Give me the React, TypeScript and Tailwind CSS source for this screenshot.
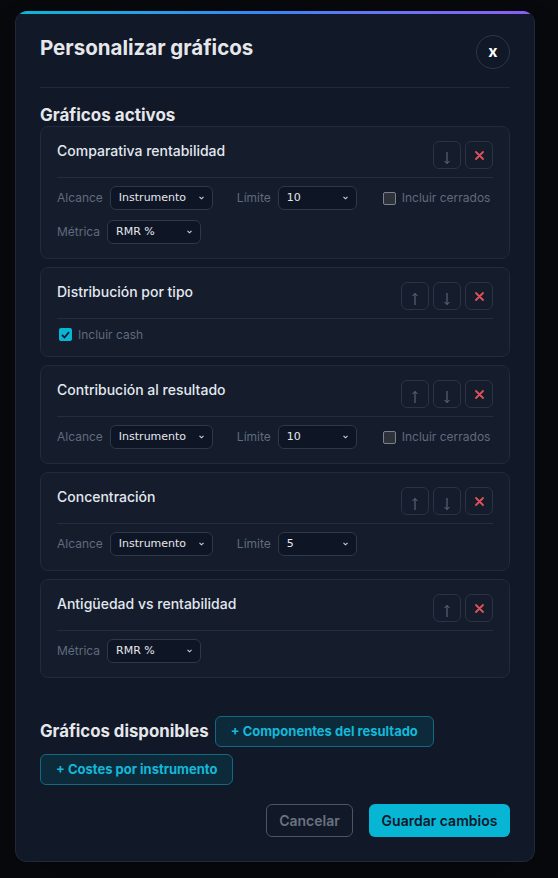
import React from "react"

type Ctrl =
  | { kind: "select"; label: string; value: string; w: string }
  | { kind: "check"; label: string; checked: boolean }

type Chart = {
  title: string
  actions: ("up" | "down" | "remove")[]
  rows: Ctrl[][]
}

const charts: Chart[] = [
  {
    title: "Comparativa rentabilidad",
    actions: ["down", "remove"],
    rows: [
      [
        { kind: "select", label: "Alcance", value: "Instrumento", w: "w-[103px]" },
        { kind: "select", label: "Límite", value: "10", w: "w-[79px]" },
        { kind: "check", label: "Incluir cerrados", checked: false },
      ],
      [{ kind: "select", label: "Métrica", value: "RMR %", w: "w-[94px]" }],
    ],
  },
  {
    title: "Distribución por tipo",
    actions: ["up", "down", "remove"],
    rows: [[{ kind: "check", label: "Incluir cash", checked: true }]],
  },
  {
    title: "Contribución al resultado",
    actions: ["up", "down", "remove"],
    rows: [
      [
        { kind: "select", label: "Alcance", value: "Instrumento", w: "w-[103px]" },
        { kind: "select", label: "Límite", value: "10", w: "w-[79px]" },
        { kind: "check", label: "Incluir cerrados", checked: false },
      ],
    ],
  },
  {
    title: "Concentración",
    actions: ["up", "down", "remove"],
    rows: [
      [
        { kind: "select", label: "Alcance", value: "Instrumento", w: "w-[103px]" },
        { kind: "select", label: "Límite", value: "5", w: "w-[79px]" },
      ],
    ],
  },
  {
    title: "Antigüedad vs rentabilidad",
    actions: ["up", "remove"],
    rows: [[{ kind: "select", label: "Métrica", value: "RMR %", w: "w-[94px]" }]],
  },
]

function ActionButton({ type }: { type: "up" | "down" | "remove" }) {
  return (
    <button className="flex h-7 w-7 items-center justify-center rounded-md border border-[#2a3446] bg-transparent">
      {type === "remove" ? (
        <svg width="9" height="9" viewBox="0 0 9 9" className="stroke-[#e0525a]" strokeWidth="1.8" strokeLinecap="round">
          <path d="M1 1 L8 8 M8 1 L1 8" />
        </svg>
      ) : (
        <svg width="8" height="14" viewBox="0 0 8 14" className="mt-[5px] stroke-[#647189]" strokeWidth="1" fill="none">
          {type === "up" ? <path d="M4 1.5 V13 M1.5 4 L4 1.5 L6.5 4" /> : <path d="M4 1 V12.5 M1.5 10 L4 12.5 L6.5 10" />}
        </svg>
      )}
    </button>
  )
}

function Select({ value, w }: { value: string; w: string }) {
  return (
    <div
      className={`flex h-6 ${w} items-center justify-between rounded-md border border-[#2d384b] bg-[#0e1525] pl-2 pr-[8px] text-[11px] text-[#e5e7eb]`}
      style={{ fontFamily: '"DejaVu Sans", sans-serif' }}
    >
      <span>{value}</span>
      <svg width="5" height="4" viewBox="0 0 5 4" fill="none" className="stroke-[#cbd5e1]" strokeWidth="1.1">
        <path d="M0.5 0.8 L2.5 2.8 L4.5 0.8" />
      </svg>
    </div>
  )
}

function Check({ label, checked }: { label: string; checked: boolean }) {
  return (
    <div className="flex h-[15px] items-center gap-[6px]">
      {checked ? (
        <div className="ml-[2px] flex h-[13px] w-[13px] items-center justify-center rounded-[2px] bg-[#06b6d4]">
          <svg width="9" height="8" viewBox="0 0 9 8" fill="none" className="stroke-[#0f172a]" strokeWidth="1.8">
            <path d="M1 4 L3.5 6.5 L8 1.2" />
          </svg>
        </div>
      ) : (
        <div className="ml-[2px] h-[13px] w-[13px] rounded-[2px] border border-[#7c818c] bg-[#2e323b]" />
      )}
      <span className="whitespace-nowrap text-[12px] text-[#5f6b7e]">{label}</span>
    </div>
  )
}

function ChartCard({ chart }: { chart: Chart }) {
  return (
    <div className="rounded-lg border border-[#222b3b] bg-[#151c2b] px-4 py-[14px]">
      <div className="flex items-start justify-between border-b border-[#252e3e] pb-2">
        <h4 className="text-[14px] font-medium leading-5 text-[#e2e8f0]">{chart.title}</h4>
        <div className="flex gap-1">
          {chart.actions.map((a) => (
            <ActionButton key={a} type={a} />
          ))}
        </div>
      </div>
      <div className="mt-2 flex flex-col gap-[10px]">
        {chart.rows.map((row, i) => (
          <div key={i} className="flex items-center gap-6">
            {row.map((c) =>
              c.kind === "select" ? (
                <div key={c.label} className="flex items-center gap-[7px]">
                  <span className="text-[12px] text-[#5f6b7e]">{c.label}</span>
                  <Select value={c.value} w={c.w} />
                </div>
              ) : (
                <Check key={c.label} label={c.label} checked={c.checked} />
              )
            )}
          </div>
        ))}
      </div>
    </div>
  )
}

export default function App() {
  return (
    <div className="min-h-screen bg-[#07090d] pl-[15px] pt-[11px]" style={{ fontFamily: "Inter, sans-serif" }}>
      <div className="w-[520px] overflow-hidden rounded-xl border border-t-0 border-[#1f2937] bg-[#111827] shadow-2xl">
        <div className="h-[3px] bg-gradient-to-r from-[#06b6d4] via-[#3b82f6] to-[#8b5cf6]" />
        <div className="px-6 pb-6 pt-[21px]">
          {/* Header */}
          <div className="flex items-start justify-between border-b border-[#1f2937] pb-[18px]">
            <h2 className="text-[20.5px] font-bold leading-[26px] text-[#e5e7eb]">Personalizar gráficos</h2>
            <button className="flex h-[34px] w-[34px] items-center justify-center rounded-full border border-[#2d3748] pb-[2px] text-[16px] font-bold text-white">
              x
            </button>
          </div>

          {/* Active charts */}
          <h3 className="mt-[17px] text-[17px] font-bold leading-[21px] text-[#e5e7eb]">Gráficos activos</h3>
          <div className="flex flex-col gap-[8px]">
            {charts.map((c) => (
              <ChartCard key={c.title} chart={c} />
            ))}
          </div>

          {/* Available charts */}
          <div className="mt-[38px] flex flex-wrap items-center gap-x-[6px] gap-y-[7px]">
            <h3 className="text-[16.8px] font-bold text-[#e5e7eb]">Gráficos disponibles</h3>
            <button className="h-[31px] rounded-md border border-[#126a80] bg-[#0d2a3b] px-[15px] text-[13px] font-bold text-[#14b8d8]">
              + Componentes del resultado
            </button>
            <button className="h-[31px] rounded-md border border-[#126a80] bg-[#0d2a3b] px-[15px] text-[13px] font-bold text-[#14b8d8]">
              + Costes por instrumento
            </button>
          </div>

          {/* Footer */}
          <div className="mt-[19px] flex justify-end gap-4">
            <button className="h-[33px] w-[87px] rounded-md border border-[#4b5563] text-[14px] font-semibold text-[#6b7280]">
              Cancelar
            </button>
            <button className="h-[33px] w-[141px] rounded-md bg-[#06b6d4] text-[14px] font-semibold text-[#0f172a]">
              Guardar cambios
            </button>
          </div>
        </div>
      </div>
    </div>
  )
}
